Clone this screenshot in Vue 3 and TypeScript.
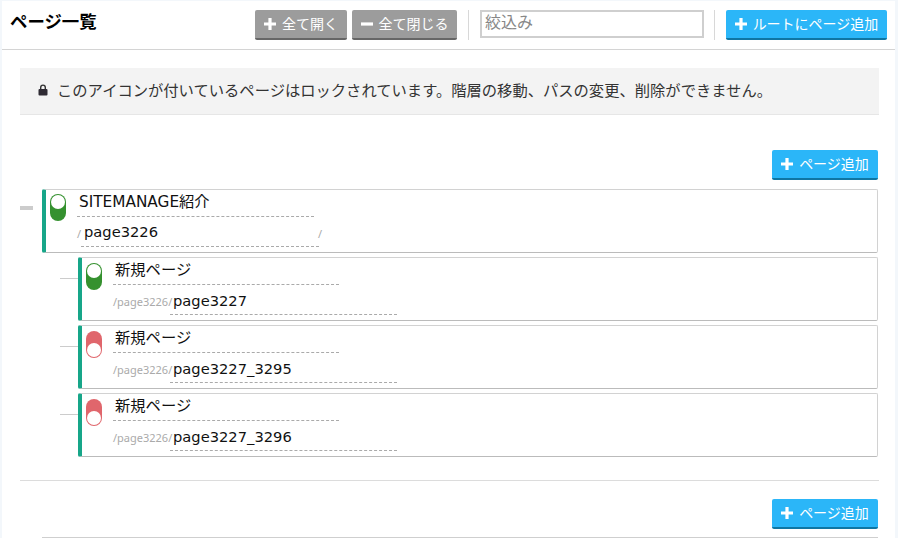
<script setup lang="ts">
interface Page { title: string; prefix: string; slug: string; on: boolean }
const children: Page[] = [
  { title: '新規ページ', prefix: '/page3226/', slug: 'page3227', on: true },
  { title: '新規ページ', prefix: '/page3226/', slug: 'page3227_3295', on: false },
  { title: '新規ページ', prefix: '/page3226/', slug: 'page3227_3296', on: false },
]
</script>

<template>
  <div class="frame">
    <main class="panel">
      <header class="head">
        <h1 class="title">ページ一覧</h1>
        <div class="tools">
          <button class="btn grey">
            <svg class="ico" viewBox="0 0 12 12"><path d="M4.4 0h3.2v4.4H12v3.2H7.6V12H4.4V7.6H0V4.4h4.4z" /></svg>全て開く
          </button>
          <button class="btn grey close">
            <svg class="ico" viewBox="0 0 12 12"><path d="M0 4.4h12v3.2H0z" /></svg>全て閉じる
          </button>
          <span class="sep first"></span>
          <input class="filter" placeholder="絞込み" />
          <span class="sep"></span>
          <button class="btn blue root">
            <svg class="ico" viewBox="0 0 12 12"><path d="M4.4 0h3.2v4.4H12v3.2H7.6V12H4.4V7.6H0V4.4h4.4z" /></svg>ルートにページ追加
          </button>
        </div>
      </header>

      <section class="content">
        <p class="notice">
          <svg class="lock" viewBox="0 0 10 12"><path d="M2 5V3.400a3 3 0 0 1 6 0V5H6.600V3.400a1.600 1.600 0 0 0-3.200 0V5z" fill="#333" /><rect y="5" x="0.500" width="9" height="6.500" rx="1" fill="#2e2a33" /></svg>
          このアイコンが付いているページはロックされています。階層の移動、パスの変更、削除ができません。
        </p>

        <div class="add-row">
          <button class="btn blue add">
            <svg class="ico" viewBox="0 0 12 12"><path d="M4.4 0h3.2v4.4H12v3.2H7.6V12H4.4V7.6H0V4.4h4.4z" /></svg>ページ追加
          </button>
        </div>

        <div class="row top-row">
          <span class="collapse"></span>
          <article class="card">
            <span class="toggle on first-toggle"></span>
            <div class="fields">
              <div class="name name-top">SITEMANAGE紹介</div>
              <div class="path">
                <span class="slash">/</span>
                <span class="slug slug-top">page3226</span>
                <span class="slash end">/</span>
              </div>
            </div>
          </article>
        </div>

        <div v-for="p in children" :key="p.slug" class="row child-row">
          <span class="branch"></span>
          <article class="card">
            <span class="toggle" :class="p.on ? 'on' : 'off'"></span>
            <div class="fields">
              <div class="name">{{ p.title }}</div>
              <div class="path">
                <span class="prefix">{{ p.prefix }}</span>
                <span class="slug">{{ p.slug }}</span>
              </div>
            </div>
          </article>
        </div>

        <hr class="divider" />

        <div class="add-row second">
          <button class="btn blue add">
            <svg class="ico" viewBox="0 0 12 12"><path d="M4.4 0h3.2v4.4H12v3.2H7.6V12H4.4V7.6H0V4.4h4.4z" /></svg>ページ追加
          </button>
        </div>

        <div class="next-card"></div>
      </section>
    </main>
  </div>
</template>

<style>
html, body { margin: 0; background: #f3f7fb; }
</style>

<style scoped>
.frame {
  width: 898px;
  height: 538px;
  box-sizing: border-box;
  padding: 1px 3px 0 2px;
  background: #f3f7fb;
  overflow: hidden;
  font-family: "Noto Sans", "Noto Sans CJK JP", sans-serif;
  color: #111;
}
.panel { background: #fff; height: 537px; overflow: hidden; }
.head {
  height: 48px;
  border-bottom: 1px solid #d4d4d4;
  display: flex;
  justify-content: space-between;
  box-sizing: content-box;
}
.title {
  margin: 0;
  padding: 8px 0 0 8px;
  font-size: 17.4px;
  line-height: 24px;
  font-weight: 700;
  color: #000;
}
.tools { display: flex; align-items: flex-start; padding-top: 9px; padding-right: 8px; }
.btn {
  height: 30px;
  box-sizing: border-box;
  border: 0;
  border-radius: 2px;
  color: #fff;
  font: inherit;
  font-size: 14px;
  line-height: 26px;
  padding: 0;
  display: flex;
  align-items: center;
  justify-content: center;
  gap: 6px;
}
.ico { width: 12px; height: 12px; fill: #fff; flex: none; }
.grey { background: #9c9c9c; border-bottom: 2px solid #666; width: 92px; padding-bottom: 1px; }
.close { width: 105px; margin-left: 5px; }
.blue { background: #2bb6f8; border-bottom: 2px solid #0f76a3; padding-bottom: 1px; }
.root { width: 161px; }
.add { width: 106px; }
.sep { width: 1px; height: 30px; background: #d8d8d8; margin: 0 11px 0 10px; }
.sep.first { margin-left: 11px; }
.filter {
  width: 224px;
  height: 28px;
  box-sizing: border-box;
  border: 2px solid #cfcfcf;
  padding: 0 3px 5px;
  font: inherit;
  font-size: 16px;
  outline: none;
}
.filter::placeholder { color: #888; opacity: 1; }
.content { padding: 18px 16px 0 18px; }
.notice {
  margin: 0;
  height: 47px;
  box-sizing: border-box;
  background: #f3f3f3;
  border-bottom: 1px solid #e6e6e6;
  display: flex;
  align-items: center;
  padding: 0 0 4px 18px;
  font-size: 15.3px;
  color: #333;
  gap: 9px;
}
.lock { width: 10px; height: 12px; flex: none; margin-top: 2px; }
.add-row { display: flex; justify-content: flex-end; margin-top: 35px; padding-right: 1px; }
.add-row.second { margin-top: 18px; }
.row { display: flex; }
.top-row { margin-top: 9px; }
.child-row { margin-top: 4px; padding-left: 40px; }
.collapse { width: 13px; height: 4px; background: #ccc; margin-top: 17px; margin-right: 9px; flex: none; }
.branch { width: 18px; height: 1px; background: #ccc; margin-top: 21px; flex: none; }
.card {
  flex: 1;
  height: 64px;
  box-sizing: border-box;
  margin-right: 1px;
  border: 1px solid #d2d2d2;
  border-bottom-color: #bbb;
  border-left: 4px solid #17a689;
  border-radius: 2px;
  display: flex;
  min-width: 0;
}
.toggle {
  width: 16px;
  height: 27px;
  box-sizing: border-box;
  border-radius: 8px;
  flex: none;
  margin: 5px 0 0 4px;
  position: relative;
}
.first-toggle { margin-top: 4px; }
.toggle::after {
  content: "";
  position: absolute;
  left: 1px;
  width: 14px;
  height: 14px;
  border-radius: 50%;
  background: #fff;
}
.toggle.on { background: #35912f; }
.toggle.on::after { top: 1px; }
.toggle.off { background: #e0666c; }
.toggle.off::after { bottom: 1px; }
.fields { margin-left: 11px; display: flex; flex-direction: column; }
.name {
  width: 226px;
  height: 27px;
  box-sizing: border-box;
  border-bottom: 1px dashed #aaa;
  padding: 1px 0 0 2px;
  font-family: "DejaVu Sans", "Noto Sans CJK JP", sans-serif;
  font-size: 15.3px;
  line-height: 22px;
  color: #111;
}
.name-top { width: 237px; }
.path { display: flex; align-items: flex-start; margin-top: 3px; }
.prefix { font-size: 11px; line-height: 27px; color: #aaa; width: 57px; flex: none; }
.slug {
  width: 227px;
  height: 27px;
  box-sizing: border-box;
  border-bottom: 1px dashed #aaa;
  padding-left: 3px;
  font-family: "DejaVu Sans", "Noto Sans CJK JP", sans-serif;
  font-size: 14.7px;
  line-height: 26px;
  color: #111;
}
.slash { font-size: 11px; color: #aaa; line-height: 28px; width: 4px; flex: none; }
.slug-top { width: 238px; margin-left: 0; line-height: 24px; }
.end { margin-left: -1px; }
.divider { border: 0; height: 1px; background: #dcdcdc; margin: 23px 0 0; }
.next-card { margin: 8px 1px 0 22px; height: 20px; border-top: 1px solid #cfcfcf; }
</style>
